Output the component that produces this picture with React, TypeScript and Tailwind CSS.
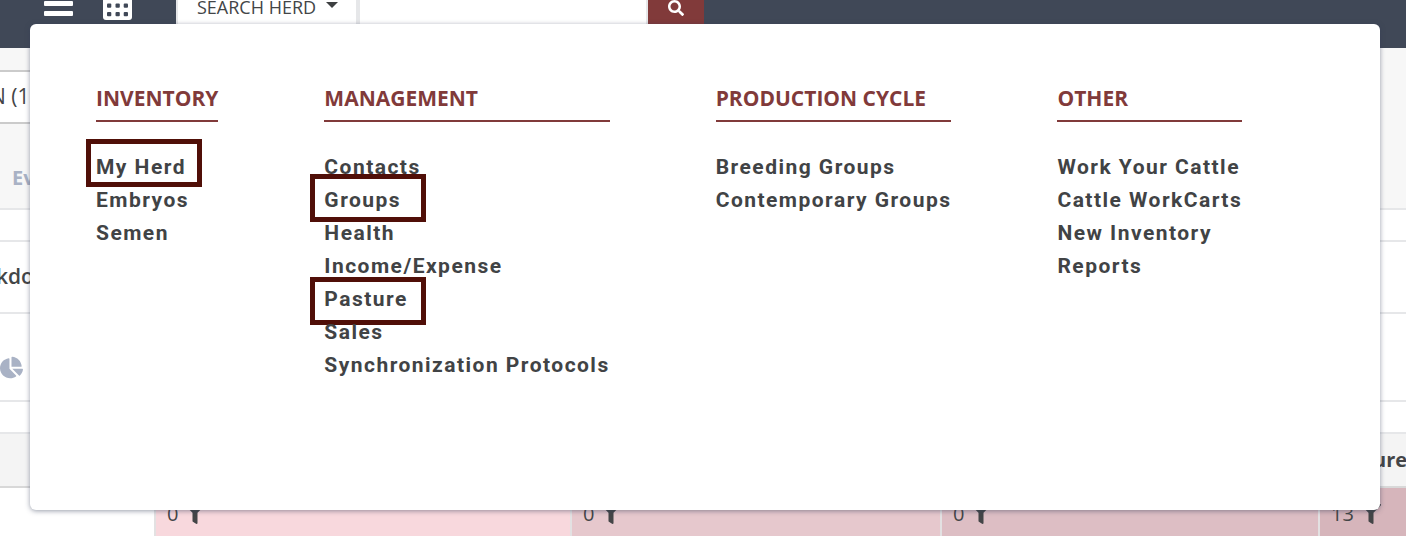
import { FaChartPie, FaFilter, FaSearch } from 'react-icons/fa'

const menuGroups = [
  {
    title: 'INVENTORY',
    links: [
      { label: 'My Herd', box: '-left-2.5 -top-3 h-12' },
      { label: 'Embryos' },
      { label: 'Semen' },
    ],
  },
  {
    title: 'MANAGEMENT',
    links: [
      { label: 'Contacts' },
      { label: 'Groups', box: '-left-3.5 -top-2.5 h-12' },
      { label: 'Health' },
      { label: 'Income/Expense' },
      { label: 'Pasture', box: '-left-3.5 -top-1.5 h-12' },
      { label: 'Sales' },
      { label: 'Synchronization Protocols' },
    ],
  },
  {
    title: 'PRODUCTION CYCLE',
    links: [{ label: 'Breeding Groups' }, { label: 'Contemporary Groups' }],
  },
  {
    title: 'OTHER',
    links: [
      { label: 'Work Your Cattle' },
      { label: 'Cattle WorkCarts' },
      { label: 'New Inventory' },
      { label: 'Reports' },
    ],
  },
]

const cells = [
  { value: 0, color: 'bg-[#f8d8dd]' },
  { value: 0, color: 'bg-[#e6c8cd]' },
  { value: 0, color: 'bg-[#ddbec4]' },
  { value: 13, color: 'bg-[#d6b5bb]' },
]

function Header() {
  return (
    <header className="-mt-[34px] flex h-[82px] items-center bg-[#404857] pl-11">
      <button aria-label="Menu" className="mr-[30px]">
        <svg width="29" height="40" viewBox="0 0 29 40" fill="#fff">
          <rect y="4" width="29" height="5" rx="1" />
          <rect y="14" width="29" height="5" rx="1" />
          <rect y="24" width="29" height="5" rx="1" />
        </svg>
      </button>
      <button aria-label="Apps" className="mr-11">
        <svg width="29" height="40" viewBox="0 0 29 40">
          <rect y="4" width="29" height="29" rx="3" fill="#fff" />
          {[8, 16.5, 25].map((y) =>
            [4, 12.5, 20.7].map((x) => (
              <rect key={`${x}-${y}`} x={x} y={y} width="4.3" height="4.3" rx="1" fill="#404857" />
            ))
          )}
        </svg>
      </button>
      <form className="flex h-14 border-l-2 border-[#e6e7e9]" onSubmit={(e) => e.preventDefault()}>
        <button type="button" className="flex w-[178px] items-center bg-white pl-[19px] text-lg text-[#434547]">
          SEARCH HERD
          <svg className="ml-2.5 mb-1" width="12" height="6" viewBox="0 0 12 6" fill="#3d3f41">
            <path d="M0 0h12L6 6z" />
          </svg>
        </button>
        <input aria-label="Search herd" className="w-[292px] border-l-4 border-r-2 border-[#e6e7e9] bg-white px-3 outline-none" />
        <button aria-label="Search" className="flex w-14 items-center justify-center bg-[#813a3a] pt-0.5 text-white">
          <FaSearch size={16} />
        </button>
      </form>
    </header>
  )
}

function MegaMenu() {
  return (
    <nav className="absolute left-[30px] right-[26px] top-6 flex gap-[106px] rounded-md bg-white px-[66px] pb-32 pt-[60px] shadow-[0_1px_5px_rgba(50,60,85,0.5)]">
      {menuGroups.map((group) => (
        <section key={group.title}>
          <h2 className="mb-[29px] border-b-2 border-[#813a3a] pb-2 text-[21px] leading-7 font-bold whitespace-nowrap text-[#813a3a]">
            {group.title}
          </h2>
          <ul className="font-[Roboto,sans-serif] text-[21px] leading-[33px] font-bold tracking-[0.07em] text-[#414345]">
            {group.links.map((link) => (
              <li key={link.label} className="relative whitespace-nowrap">
                <a href="#">{link.label}</a>
                {link.box && (
                  <span className={`pointer-events-none absolute w-[116px] border-5 border-[#500f08] ${link.box}`} />
                )}
              </li>
            ))}
          </ul>
        </section>
      ))}
    </nav>
  )
}

export default function App() {
  return (
    <div className="relative overflow-hidden bg-white font-['Open_Sans',sans-serif] text-[#434547]">
      <Header />

      <div className="h-40 bg-[#f7f7f7] pt-[22px]">
        <div className="flex h-[54px] w-40 items-center border-y-2 border-[#cbcbcb] bg-white text-[21px]">
          <span className="-ml-2.5">N (13</span>
        </div>
        <p className="pl-3 pt-10 text-xl font-bold text-[#a9b2c5]">Ev</p>
      </div>

      <div className="h-8 border-t-2 border-[#e6e7e9]" />
      <div className="flex h-[72px] items-center border-t-2 border-[#e6e7e9]">
        <h1 className="-ml-1 text-[21px] font-semibold">kdo</h1>
      </div>
      <div className="flex h-[88px] items-center border-t-2 border-[#e6e7e9] pt-5">
        <FaChartPie size={23} className="text-[#a9b2c5]" />
      </div>
      <div className="h-8 border-t-2 border-[#e6e7e9]" />

      <table className="w-full table-fixed border-collapse text-left text-xl">
        <colgroup>
          <col className="w-[155px]" />
          <col className="w-[416px]" />
          <col className="w-[370px]" />
          <col className="w-[378px]" />
          <col />
        </colgroup>
        <thead>
          <tr className="h-[54px] border-y-2 border-t-[#e6e7e9] border-b-[#d8d8d8] bg-[#f4f4f4]">
            <th />
            <th />
            <th />
            <th />
            <th className="overflow-hidden pl-[54px] font-bold">ure</th>
          </tr>
        </thead>
        <tbody>
          <tr className="h-[49px]">
            <td />
            {cells.map((cell, i) => (
              <td key={i} className={`border-l-2 border-[#e3e1e2] pl-[11px] ${cell.color}`}>
                <div className="flex items-center gap-[7px] pt-1">
                  {cell.value}
                  <FaFilter size={20} />
                </div>
              </td>
            ))}
          </tr>
        </tbody>
      </table>

      <MegaMenu />
    </div>
  )
}
